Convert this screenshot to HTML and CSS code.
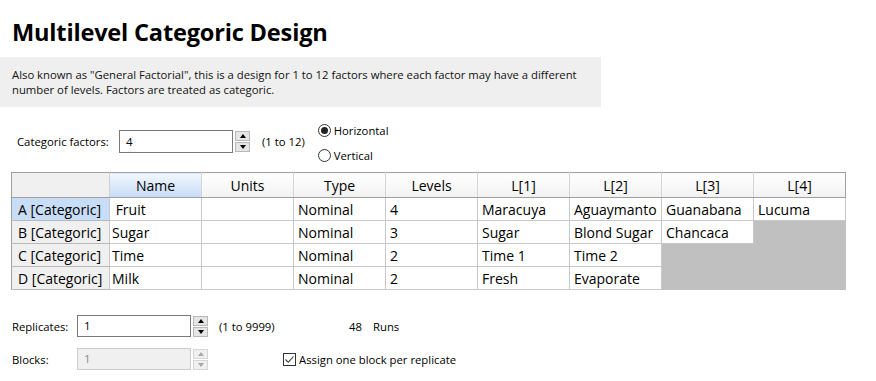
FILE: index.html
```html
<!DOCTYPE html>
<html>
<head>
<meta charset="utf-8">
<link rel="stylesheet" href="styles.css">
</head>
<body>
<div class="page">
  <h1 class="title">Multilevel Categoric Design</h1>
  <div class="desc">Also known as "General Factorial", this is a design for 1 to 12 factors where each factor may have a different<br>number of levels. Factors are treated as categoric.</div>

  <div class="factors-row">
    <span class="lbl lbl-factors">Categoric factors:</span>
    <div class="spin-field">
      <div class="input input-factors">4</div>
      <div class="spinner"><span class="sbtn"><span class="arr up"></span></span><span class="sbtn"><span class="arr down"></span></span></div>
    </div>
    <span class="range range-factors">(1 to 12)</span>
    <div class="radios">
      <div class="radio"><span class="rcircle checked"></span><span>Horizontal</span></div>
      <div class="radio"><span class="rcircle"></span><span>Vertical</span></div>
    </div>
  </div>

  <table class="grid">
    <colgroup>
      <col class="c-head"><col class="c"><col class="c"><col class="c"><col class="c"><col class="c"><col class="c"><col class="c"><col class="c">
    </colgroup>
    <thead>
      <tr>
        <th class="corner"></th>
        <th class="sel">Name</th>
        <th>Units</th>
        <th>Type</th>
        <th>Levels</th>
        <th>L[1]</th>
        <th>L[2]</th>
        <th>L[3]</th>
        <th>L[4]</th>
      </tr>
    </thead>
    <tbody>
      <tr>
        <th class="rh rh-sel">A [Categoric]</th>
        <td class="name">&nbsp;Fruit</td><td></td><td>Nominal</td><td>4</td><td>Maracuya</td><td>Aguaymanto</td><td>Guanabana</td><td>Lucuma</td>
      </tr>
      <tr>
        <th class="rh">B [Categoric]</th>
        <td class="name">Sugar</td><td></td><td>Nominal</td><td>3</td><td>Sugar</td><td>Blond Sugar</td><td>Chancaca</td><td class="off"></td>
      </tr>
      <tr>
        <th class="rh">C [Categoric]</th>
        <td class="name">Time</td><td></td><td>Nominal</td><td>2</td><td>Time 1</td><td>Time 2</td><td class="off"></td><td class="off"></td>
      </tr>
      <tr>
        <th class="rh">D [Categoric]</th>
        <td class="name">Milk</td><td></td><td>Nominal</td><td>2</td><td>Fresh</td><td>Evaporate</td><td class="off"></td><td class="off"></td>
      </tr>
    </tbody>
  </table>

  <div class="bottom">
    <div class="brow">
      <span class="lbl lbl-bottom">Replicates:</span>
      <div class="spin-field">
        <div class="input input-bottom">1</div>
        <div class="spinner"><span class="sbtn"><span class="arr up"></span></span><span class="sbtn"><span class="arr down"></span></span></div>
      </div>
      <span class="range range-rep">(1 to 9999)</span>
      <span class="runs-num">48</span>
      <span class="runs-lbl">Runs</span>
    </div>
    <div class="brow">
      <span class="lbl lbl-bottom">Blocks:</span>
      <div class="spin-field disabled">
        <div class="input input-bottom">1</div>
        <div class="spinner"><span class="sbtn"><span class="arr up"></span></span><span class="sbtn"><span class="arr down"></span></span></div>
      </div>
      <div class="check">
        <span class="cbox"><svg width="11" height="11" viewBox="0 0 11 11"><path d="M1.5 5.5 L4.3 8.3 L9.5 2.5" fill="none" stroke="#333" stroke-width="1.1"/></svg></span>
        <span>Assign one block per replicate</span>
      </div>
    </div>
  </div>
</div>
</body>
</html>
```

FILE: styles.css
```css
* { box-sizing: border-box; }
html, body { margin: 0; padding: 0; background: #fff; }
body {
  font-family: "Open Sans", "Noto Sans", "Liberation Sans", sans-serif;
  font-size: 11.3px;
  color: #000;
}
.page { width: 876px; height: 381px; overflow: hidden; }

.title {
  margin: 0;
  padding: 16px 0 0 12px;
  height: 57px;
  font-size: 23.6px;
  font-weight: 700;
  line-height: 32px;
  letter-spacing: -0.2px;
}

.desc {
  width: 601px;
  height: 50px;
  background: #efefef;
  padding: 10px 0 0 12px;
  font-size: 11.3px;
  line-height: 15px;
  color: #111;
}

.factors-row {
  display: flex;
  align-items: flex-start;
  height: 65px;
  padding: 13px 0 0 17px;
}
.lbl-factors { width: 102px; line-height: 23px; margin-top: 10px; }
.factors-row .spin-field { margin-top: 10px; }
.range-factors { margin-left: 12px; line-height: 23px; margin-top: 10px; }

.spin-field { display: flex; align-items: center; gap: 2px; }
.input {
  height: 23px;
  border: 1px solid #7a7a7a;
  background: #fff;
  padding-left: 6px;
  line-height: 21px;
  font-size: 11.5px;
}
.input-factors { width: 114px; }
.input-bottom { width: 114px; height: 22px; line-height: 20px; }

.spinner { display: flex; flex-direction: column; gap: 1px; }
.sbtn {
  width: 15px; height: 10px;
  background: #e5e5e5;
  border: 1px solid #b8b8b8;
  display: flex; align-items: center; justify-content: center;
}
.arr { width: 0; height: 0; border-left: 3.5px solid transparent; border-right: 3.5px solid transparent; }
.arr.up { border-bottom: 4px solid #000; }
.arr.down { border-top: 4px solid #000; }

.disabled .input { background: #f0f0f0; border-color: #cccccc; color: #8a8a8a; }
.disabled .sbtn { background: #f0f0f0; border-color: #d6d6d6; }
.disabled .arr.up { border-bottom-color: #a8a8a8; }
.disabled .arr.down { border-top-color: #a8a8a8; }

.radios { margin-left: 13px; margin-top: 2px; display: flex; flex-direction: column; gap: 8px; }
.radio { display: flex; align-items: center; gap: 3px; height: 17px; }
.rcircle {
  width: 13px; height: 13px; border-radius: 50%;
  border: 1px solid #333; background: #fff;
  display: flex; align-items: center; justify-content: center;
}
.rcircle.checked::after {
  content: ""; width: 7px; height: 7px; border-radius: 50%; background: #222;
}

.grid {
  margin-left: 11px;
  border-collapse: collapse;
  table-layout: fixed;
  width: 835px;
  font-size: 14px;
  border: 1px solid #a0a0a0;
}
.c-head { width: 98px; }
.c { width: 92px; }
.grid thead th {
  height: 25px;
  font-weight: 400;
  text-align: center;
  background: linear-gradient(#ffffff, #f2f2f2);
  border-left: 1px solid #d5d5d5;
  border-bottom: 1px solid #a0a0a0;
  padding: 0;
}
.grid thead th.corner { background: #f0f0f0; border-left: none; border-right: 1px solid #d0d0d0; }
.grid thead th.sel { background: linear-gradient(#f2f7fe, #c6dcf7); }
.grid td, .grid tbody th {
  height: 23px;
  padding: 0 0 0 4px;
  border: 1px solid #c8c8c8;
  white-space: nowrap;
  overflow: hidden;
  font-weight: 400;
  text-align: left;
}
.grid td.name { padding-left: 2px; }
.grid tbody th.rh {
  background: #f0f0f0;
  padding-left: 6px;
  border-top: none;
  border-left: none;
  border-bottom: 1px solid #b8b8b8;
}
.grid tbody th.rh-sel { background: #c8ddf7; }
.grid td.off { background: #c0c0c0; border-color: #c0c0c0; }
.grid tr:last-child td.off { border-bottom-color: #c0c0c0; }

.bottom { padding: 25px 0 0 12px; display: flex; flex-direction: column; gap: 11px; }
.brow { display: flex; align-items: center; height: 22px; }
.lbl-bottom { width: 65px; }
.range-rep { margin-left: 11px; width: 130px; }
.runs-num { width: 24px; }
.check { margin-left: 75px; display: flex; align-items: center; gap: 3px; }
.cbox {
  width: 13px; height: 13px; border: 1px solid #333; background: #fff;
  display: flex; align-items: center; justify-content: center;
}
```
